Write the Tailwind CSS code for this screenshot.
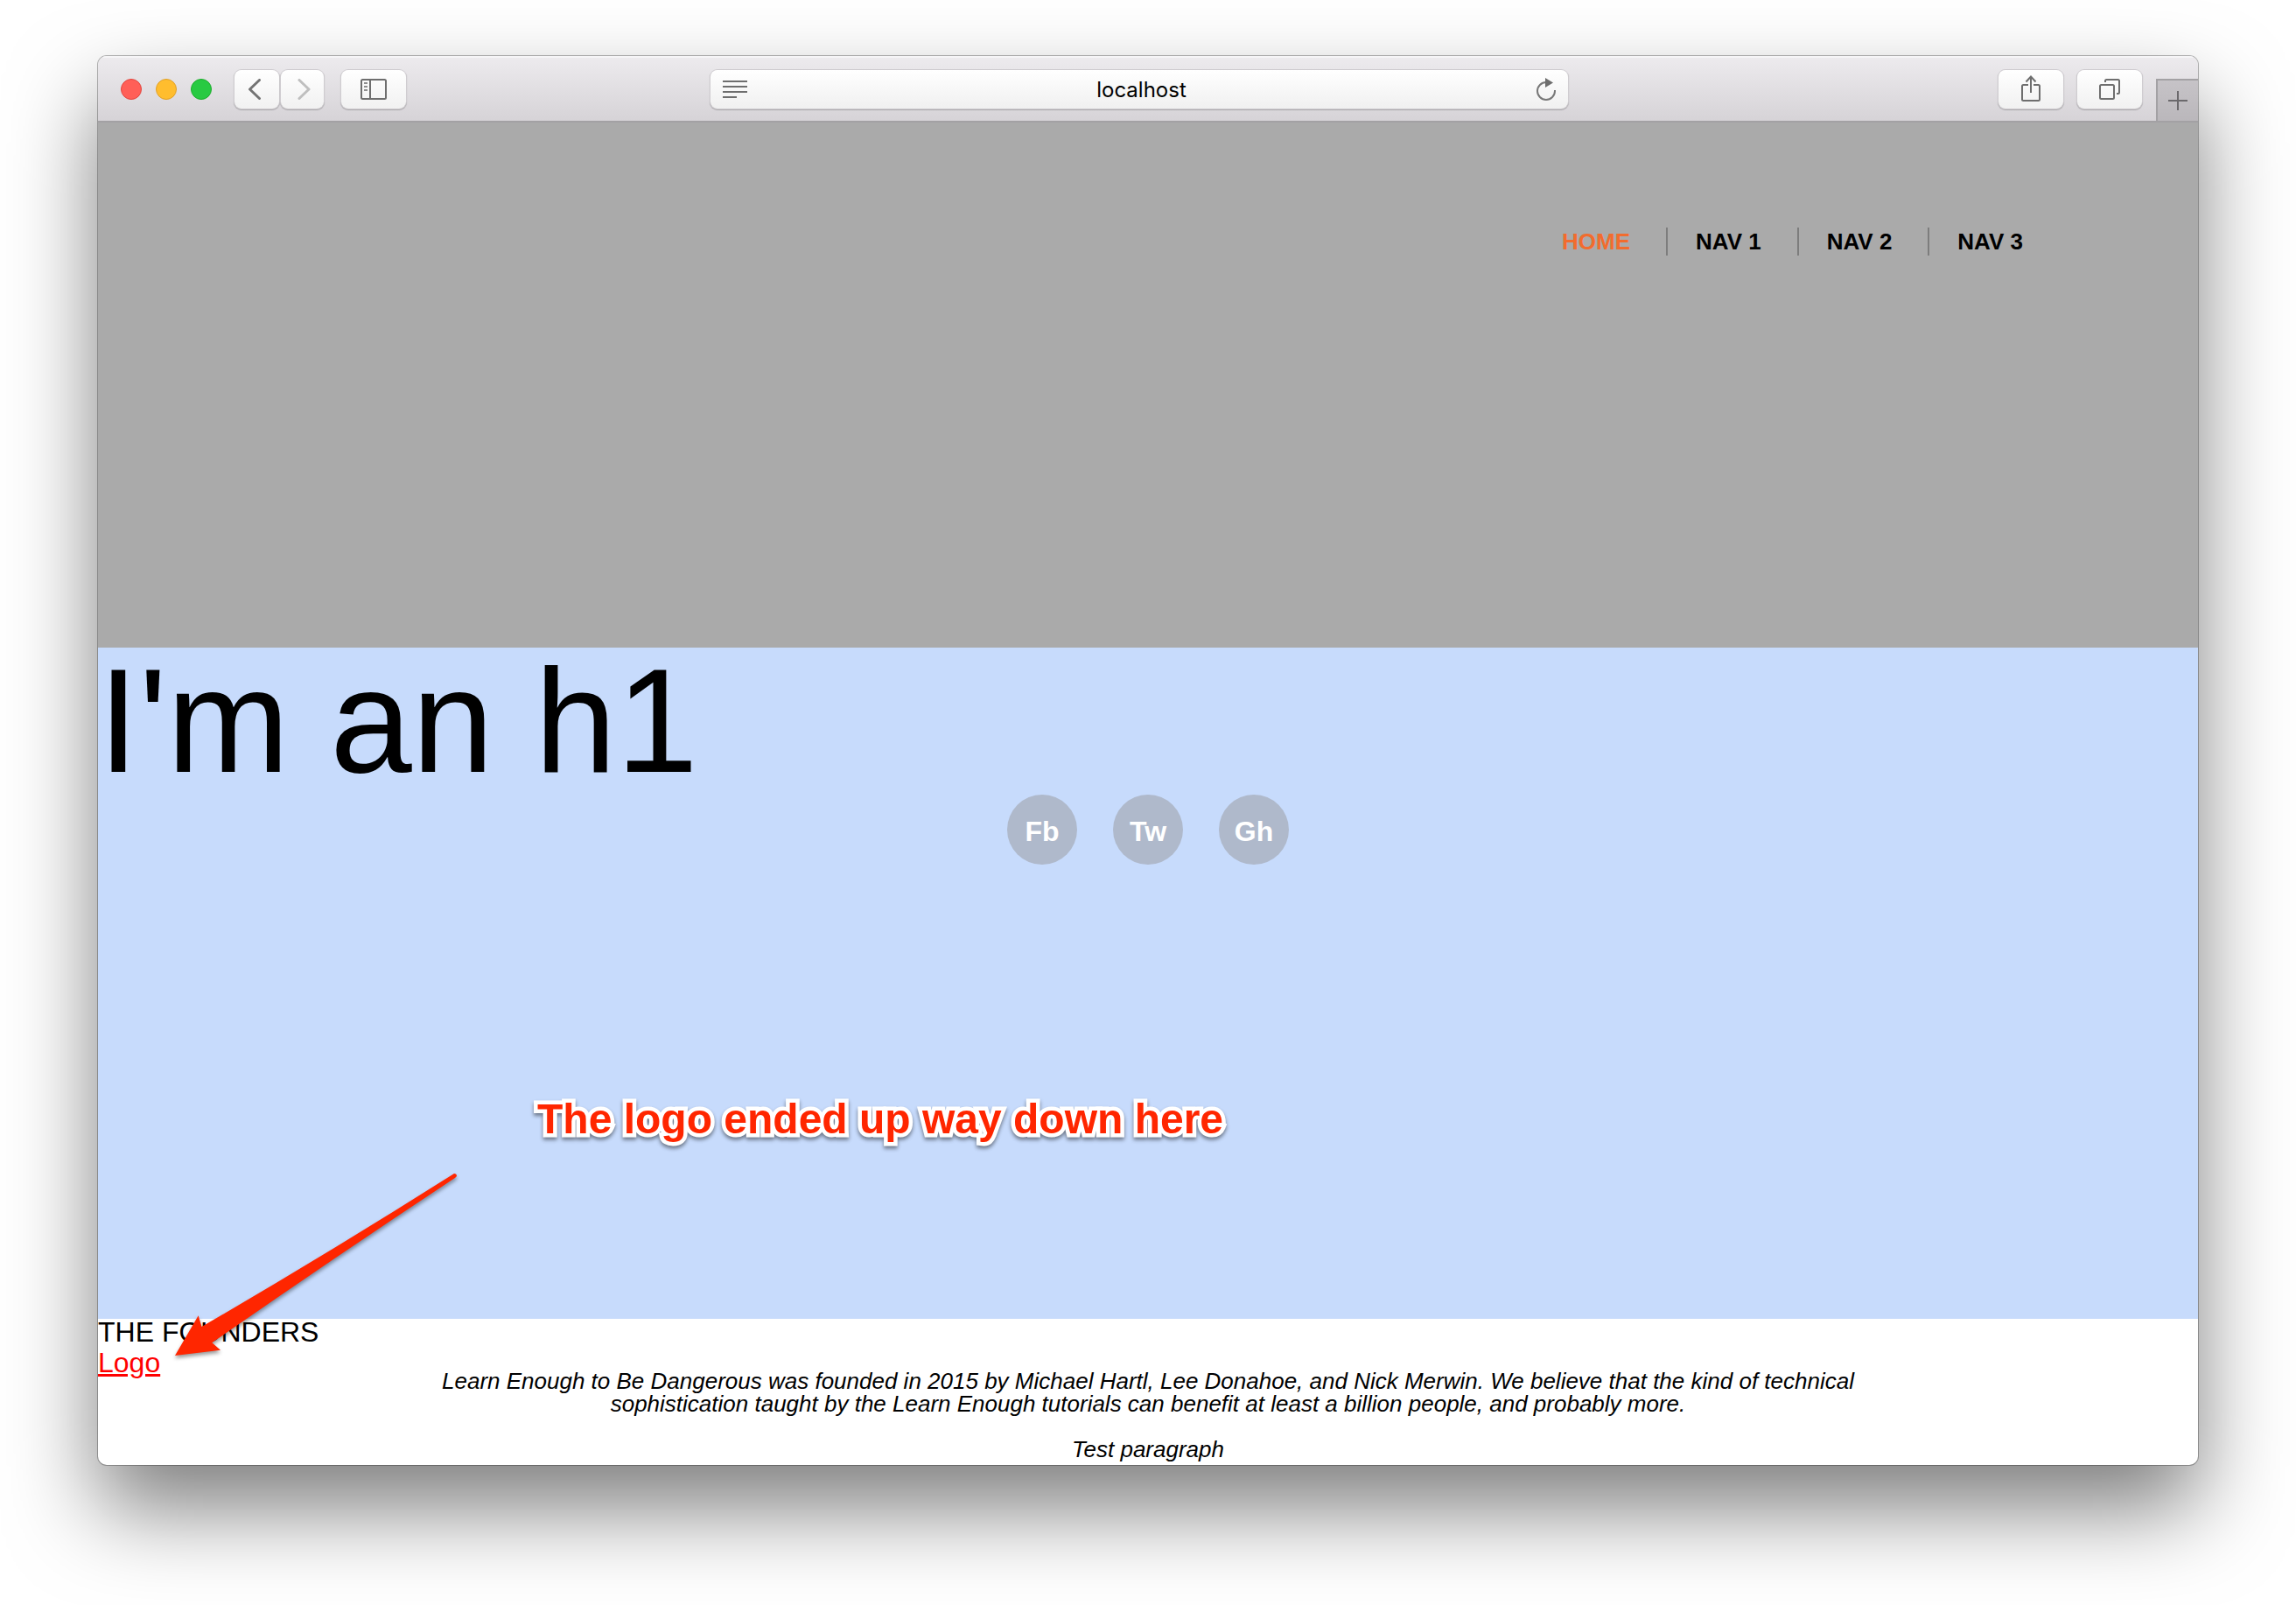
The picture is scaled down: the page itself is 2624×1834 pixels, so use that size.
<!DOCTYPE html>
<html lang="en">
<head>
<meta charset="utf-8">
<title>localhost</title>
<script src="https://cdn.jsdelivr.net/npm/@tailwindcss/browser@4"></script>
</head>
<body class="min-h-screen bg-white px-28 pt-16 pb-40 font-['Liberation_Sans',Arial,sans-serif] text-black">

<div class="overflow-hidden rounded-[10px] bg-white shadow-[0_0_0_1px_rgba(0,0,0,0.28),0_50px_100px_rgba(0,0,0,0.51)]">

  <!-- Browser toolbar -->
  <div class="flex h-19 items-start border-b-2 border-[#a3a1a4] bg-linear-to-b from-[#edebee] to-[#d6d3d7] shadow-[inset_0_2px_0_#f6f5f7]">
    <div class="flex h-full flex-1 items-start pt-4">
      <div class="ml-[26px] flex h-11 items-center gap-4">
        <button aria-label="Close" class="size-6 rounded-full border border-[#e2463f] bg-[#ff5f57]"></button>
        <button aria-label="Minimize" class="size-6 rounded-full border border-[#e0a028] bg-[#ffbd2e]"></button>
        <button aria-label="Zoom" class="size-6 rounded-full border border-[#1dad2c] bg-[#28ca42]"></button>
      </div>
      <div class="ml-[26px] flex gap-0.5">
        <button aria-label="Back" class="flex h-11 w-[51px] items-center justify-center rounded-lg bg-linear-to-b from-white to-[#f1f1f1] shadow-[0_0_0_1px_#cfccd0,0_1px_1px_1px_#aaa8ab]">
          <svg class="size-6" viewBox="0 0 24 24" fill="none" stroke="#737373" stroke-width="3" stroke-linecap="round" stroke-linejoin="round"><path d="M14.500 1.500 3.500 12l11 10.500"/></svg>
        </button>
        <button aria-label="Forward" class="flex h-11 w-[49px] items-center justify-center rounded-lg bg-linear-to-b from-white to-[#f1f1f1] shadow-[0_0_0_1px_#cfccd0,0_1px_1px_1px_#aaa8ab]">
          <svg class="size-6" viewBox="0 0 24 24" fill="none" stroke="#bfbfbf" stroke-width="3" stroke-linecap="round" stroke-linejoin="round"><path d="M8 1.500 19 12 8 22.500"/></svg>
        </button>
      </div>
      <button aria-label="Sidebar" class="ml-5 flex h-11 w-[74px] items-center justify-center rounded-lg bg-linear-to-b from-white to-[#f1f1f1] shadow-[0_0_0_1px_#cfccd0,0_1px_1px_1px_#aaa8ab]">
        <svg class="h-6 w-[30px]" viewBox="0 0 30 24" fill="none" stroke="#6e6e6e" stroke-width="2"><rect x="1" y="1" width="28" height="22" rx="1.500"/><path d="M11 1v22"/><path d="M4 5h4M4 9h4M4 13h4" stroke="#8e8e8e"/></svg>
      </button>
    </div>

    <div class="mt-4 mr-5 flex h-11 w-[980px] items-center rounded-lg bg-linear-to-b from-white to-[#f0f0f0] pr-[13px] pl-3.5 shadow-[0_0_0_1px_#cfccd0,0_1px_1px_1px_#aaa8ab]">
      <svg class="h-5 w-7" viewBox="0 0 28 20" stroke="#6e6e6e" stroke-width="2"><path d="M0 1h28M0 7h28M0 13h28M0 19h16"/></svg>
      <input aria-label="Address" value="localhost" class="min-w-0 flex-1 bg-transparent pt-0.5 text-center font-['Inter',sans-serif] text-2xl text-black outline-none">
      <button aria-label="Reload">
        <svg class="h-7 w-6" viewBox="0 0 24 28" fill="none"><path d="M12.500 6H12a10 10 0 1 0 10 10v-1" stroke="#777" stroke-width="2"/><path d="M11 1v11l9-5.500z" fill="#6e6e6e"/></svg>
      </button>
    </div>

    <div class="flex h-full flex-1 items-start justify-end">
      <button aria-label="Share" class="mt-4 flex h-11 w-[74px] items-center justify-center rounded-lg bg-linear-to-b from-white to-[#f1f1f1] shadow-[0_0_0_1px_#cfccd0,0_1px_1px_1px_#aaa8ab]">
        <svg class="h-8 w-6" viewBox="0 0 24 32" fill="none" stroke="#6e6e6e" stroke-width="2"><path d="M9 11H3.500A1.500 1.500 0 0 0 2 12.500v15A1.500 1.500 0 0 0 3.500 29h17a1.500 1.500 0 0 0 1.500-1.500v-15a1.500 1.500 0 0 0-1.500-1.500H15"/><path d="M12 20V1.500M6.500 7.500 12 1.500l5.500 6"/></svg>
      </button>
      <button aria-label="Show all tabs" class="mt-4 ml-4 flex h-11 w-[74px] items-center justify-center rounded-lg bg-linear-to-b from-white to-[#f1f1f1] shadow-[0_0_0_1px_#cfccd0,0_1px_1px_1px_#aaa8ab]">
        <svg class="size-6" viewBox="0 0 24 24" fill="none" stroke="#6e6e6e" stroke-width="2"><rect x="1" y="7" width="16" height="16" rx="1.500"/><path d="M7 4V2.500A1.500 1.500 0 0 1 8.500 1h13A1.500 1.500 0 0 1 23 2.500v13a1.500 1.500 0 0 1-1.500 1.500H20"/></svg>
      </button>
      <button aria-label="New tab" class="ml-4 flex h-12 w-12 items-center justify-center self-end border-t-2 border-l-2 border-[#a3a1a4] bg-linear-to-b from-[#c6c3c7] to-[#bab7bb]">
        <svg class="size-[22px]" viewBox="0 0 22 22" stroke="#6b696c" stroke-width="2"><path d="M11 0v22M0 11h22"/></svg>
      </button>
    </div>
  </div>

  <!-- Page header -->
  <header class="flex h-[600px] items-start justify-end bg-[#aaa] pt-[120px] pr-[200px]">
    <nav>
      <ul class="flex gap-[41px] text-[26px] leading-8 font-bold">
        <li><a href="#" class="text-[#f26c2e]">HOME</a></li>
        <li class="border-l-2 border-[#7d7d7d] pl-8"><a href="#">NAV 1</a></li>
        <li class="border-l-2 border-[#7d7d7d] pl-8"><a href="#">NAV 2</a></li>
        <li class="border-l-2 border-[#7d7d7d] pl-8"><a href="#">NAV 3</a></li>
      </ul>
    </nav>
  </header>

  <!-- Hero -->
  <section class="relative min-h-[767px] bg-[#c7dbfc]">
    <h1 class="text-[168px] leading-none">I'm an h1</h1>
    <ul class="flex justify-center gap-[41px] text-[32px] font-bold text-white">
      <li><a href="#" class="flex size-20 items-center justify-center rounded-full bg-[#afb9cb] pt-1">Fb</a></li>
      <li><a href="#" class="flex size-20 items-center justify-center rounded-full bg-[#afb9cb] pt-1">Tw</a></li>
      <li><a href="#" class="flex size-20 items-center justify-center rounded-full bg-[#afb9cb] pt-1">Gh</a></li>
    </ul>

    <!-- Annotation -->
    <p class="absolute top-[515px] left-[502px] text-5xl leading-none font-bold whitespace-nowrap text-[#ff2600] drop-shadow-[0_3px_2px_rgba(0,0,0,0.45)] [-webkit-text-stroke:9px_white] [paint-order:stroke_fill]">The logo ended up way down here</p>
    <svg class="absolute top-[590px] left-20 z-10 h-[230px] w-[340px] drop-shadow-[0_3px_2px_rgba(0,0,0,0.4)]" viewBox="0 0 340 230" fill="#ff2600"><path d="M8 219 34.700 173.300 38.500 186 Q185 101 327 11Q330 11 330 14L328 16Q190 107 50.300 204.300L60 212.700Z"/></svg>
  </section>

  <!-- Founders -->
  <section class="pb-[5px]">
    <h2 class="mb-0.5 text-[32px] leading-[30px]">THE FOUNDERS</h2>
    <div class="grid grid-cols-[1fr_70%_1fr] items-start">
      <a href="#" class="justify-self-start text-[32px] leading-9 text-[#f00] underline">Logo</a>
      <div class="space-y-[26px] pt-[26px] text-center text-[26px] leading-[26px] italic">
        <p>Learn Enough to Be Dangerous was founded in 2015 by Michael Hartl, Lee Donahoe, and Nick Merwin. We believe that the kind of technical sophistication taught by the Learn Enough tutorials can benefit at least a billion people, and probably more.</p>
        <p>Test paragraph</p>
      </div>
    </div>
  </section>
</div>

</body>
</html>
